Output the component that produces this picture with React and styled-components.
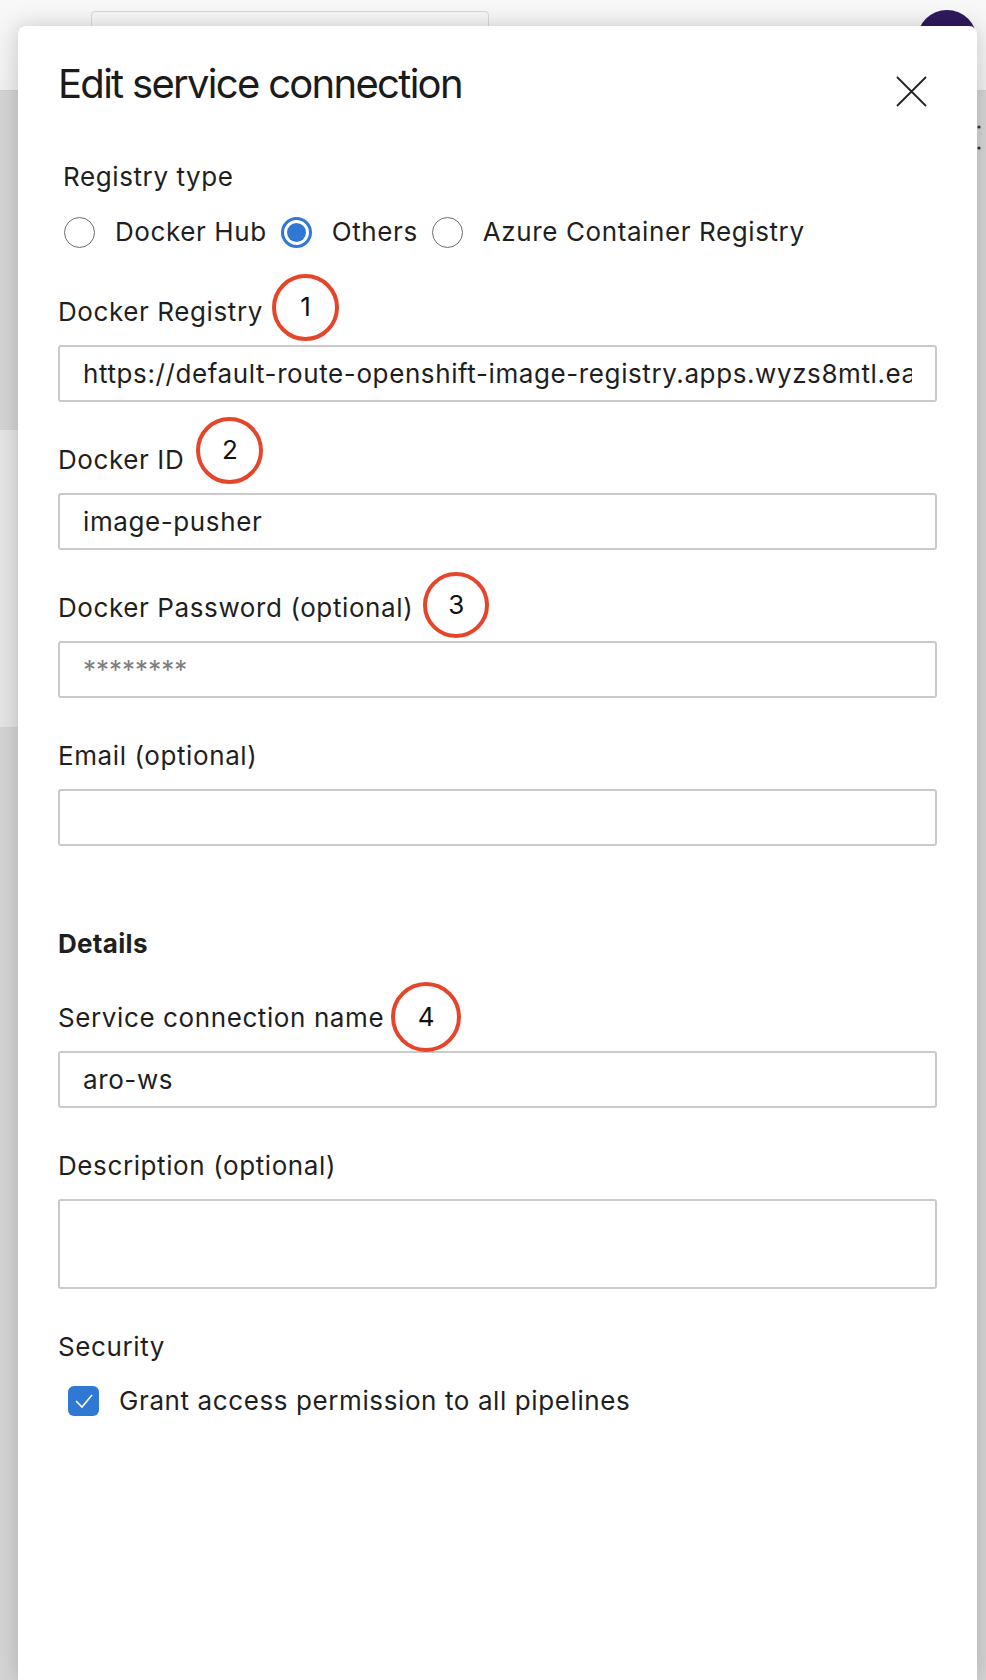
import React from 'react';
import styled, { createGlobalStyle } from 'styled-components';

const GlobalStyle = createGlobalStyle`
  html, body {
    margin: 0;
    padding: 0;
  }
  body {
    width: 986px;
    height: 1680px;
    overflow: hidden;
    background: #d5d5d5;
    font-family: Inter, "Noto Sans", "Liberation Sans", sans-serif;
    color: #1f1f1f;
  }
  * {
    box-sizing: border-box;
  }
`;

// Page that sits behind the dialog
const Page = styled.div`
  position: relative;
  width: 986px;
  height: 1680px;
  overflow: hidden;
  display: flex;
  flex-direction: column;
`;

const TopBar = styled.header`
  flex: none;
  height: 91px;
  display: flex;
  align-items: flex-start;
  justify-content: space-between;
  padding: 11px 9px 0 91px;
  background: linear-gradient(#f8f8f8, #efefef);
  border-bottom: 1px solid #d0d0d0;
`;

const SearchBox = styled.div`
  width: 398px;
  height: 46px;
  border: 1px solid #d8d8d8;
  border-radius: 4px;
  background: #f6f6f6;
`;

const Avatar = styled.div`
  width: 60px;
  height: 60px;
  margin-top: -1px;
  border-radius: 50%;
  background: #2e1a5c;
`;

const Workspace = styled.main`
  flex: 1;
  display: flex;
  flex-direction: column;
  background: #d4d4d4;
`;

const MoreButton = styled.div`
  align-self: flex-end;
  width: 9px;
  height: 28px;
  margin-top: 33px;
`;

const Card = styled.div`
  width: 520px;
  height: 297px;
  margin-top: 278px;
  background: #e4e4e4;
`;

// Dialog
const Panel = styled.section`
  position: absolute;
  top: 26px;
  left: 18px;
  right: 9px;
  bottom: 0;
  padding: 34px 40px 0 40px;
  background: #fff;
  border-radius: 8px 8px 0 0;
  box-shadow: 0 0 22px rgba(0, 0, 0, 0.18);
`;

const Header = styled.div`
  display: flex;
  align-items: flex-start;
  justify-content: space-between;
  height: 48px;
`;

const Title = styled.h1`
  margin: 0;
  font-size: 40px;
  line-height: 48px;
  font-weight: 400;
  letter-spacing: -1.7px;
  color: #1b1b1b;
`;

const CloseButton = styled.button`
  width: 31px;
  height: 31px;
  margin: 16px 10px 0 0;
  padding: 0;
  border: 0;
  background: none;
  cursor: pointer;
`;

const Form = styled.div`
  display: flex;
  flex-direction: column;
  gap: 40px;
  margin-top: 51px;
  font-size: 26px;
  letter-spacing: 0.6px;
`;

const Group = styled.div`
  display: flex;
  flex-direction: column;
  gap: ${p => p.$gap}px;
  padding-left: ${p => p.$indent || 0}px;
  margin-bottom: ${p => p.$after || 0}px;
`;

const Label = styled.div`
  display: flex;
  align-items: center;
  height: 36px;
  line-height: 36px;
  white-space: nowrap;
`;

const SectionTitle = styled(Label)`
  font-weight: 700;
  letter-spacing: 0.3px;
  margin: 40px 0 -2px;
`;

// Hand-drawn style callout next to a label
const Marker = styled.span`
  flex: none;
  display: flex;
  align-items: center;
  justify-content: center;
  width: ${p => p.$size}px;
  height: ${p => p.$size}px;
  margin-left: ${p => p.$gap}px;
  transform: translateY(${p => p.$shift}px);
  border: 4px solid #e5452a;
  border-radius: 50%;
  font-size: 26px;
  letter-spacing: 0;
  color: #111;
`;

const TextInput = styled.input`
  display: block;
  width: 100%;
  height: 57px;
  padding: 0 23px;
  border: 2px solid #cacaca;
  border-radius: 3px;
  background: #fff;
  font: inherit;
  letter-spacing: inherit;
  color: #1e1e1e;
  outline: none;

  &::placeholder {
    color: #7e7e7e;
    letter-spacing: 0;
  }
`;

const TextArea = styled.textarea`
  display: block;
  width: 100%;
  height: 90px;
  padding: 12px 23px;
  border: 2px solid #cacaca;
  border-radius: 3px;
  background: #fff;
  font: inherit;
  resize: none;
  outline: none;
`;

const RadioRow = styled.div`
  display: flex;
  align-items: center;
  gap: 14px;
  height: 36px;
  padding-left: 1px;
`;

const RadioOption = styled.label`
  display: flex;
  align-items: center;
  gap: 20px;
  line-height: 36px;
  white-space: nowrap;
`;

const RadioCircle = styled.span`
  flex: none;
  display: flex;
  align-items: center;
  justify-content: center;
  width: 31px;
  height: 31px;
  border-radius: 50%;
  border: ${p => (p.$checked ? '3px solid #2f78d3' : '1.5px solid #6e6e6e')};
  background: #fff;

  &::after {
    content: '';
    width: 19px;
    height: 19px;
    border-radius: 50%;
    background: ${p => (p.$checked ? '#2f78d3' : 'transparent')};
  }
`;

const CheckRow = styled.label`
  display: flex;
  align-items: center;
  gap: 20px;
  height: 36px;
  padding-left: 10px;
  line-height: 36px;
  white-space: nowrap;
`;

const CheckBox = styled.span`
  flex: none;
  display: flex;
  align-items: center;
  justify-content: center;
  width: 31px;
  height: 30px;
  border-radius: 6px;
  background: #2f78d3;
`;

const registryTypes = [
  { id: 'hub', label: 'Docker Hub' },
  { id: 'others', label: 'Others', checked: true },
  { id: 'acr', label: 'Azure Container Registry' },
];

function Field({ label, marker, children }) {
  return (
    <Group $gap={15}>
      <Label>
        {label}
        {marker && (
          <Marker $size={marker.size} $gap={marker.gap} $shift={marker.shift}>
            {marker.n}
          </Marker>
        )}
      </Label>
      {children}
    </Group>
  );
}

export default function App() {
  return (
    <>
      <GlobalStyle />
      <Page>
        <TopBar>
          <SearchBox />
          <Avatar />
        </TopBar>
        <Workspace>
          <MoreButton>
            <svg width="9" height="28" viewBox="0 0 9 28">
              <circle cx="2" cy="3" r="1.6" fill="#333" />
              <circle cx="2" cy="24" r="1.6" fill="#333" />
            </svg>
          </MoreButton>
          <Card />
        </Workspace>

        <Panel>
          <Header>
            <Title>Edit service connection</Title>
            <CloseButton aria-label="Close">
              <svg width="31" height="31" viewBox="0 0 31 31">
                <path d="M1 1 L30 30 M30 1 L1 30" stroke="#222" strokeWidth="1.8" fill="none" />
              </svg>
            </CloseButton>
          </Header>

          <Form>
            <Group $gap={19} $indent={5} $after={4}>
              <Label>Registry type</Label>
              <RadioRow>
                {registryTypes.map(t => (
                  <RadioOption key={t.id}>
                    <RadioCircle $checked={t.checked} />
                    {t.label}
                  </RadioOption>
                ))}
              </RadioRow>
            </Group>

            <Field label="Docker Registry" marker={{ n: 1, size: 67, gap: 9, shift: -5 }}>
              <TextInput
                readOnly
                value="https://default-route-openshift-image-registry.apps.wyzs8mtl.eastus.aroapp.io"
              />
            </Field>

            <Field label="Docker ID" marker={{ n: 2, size: 67, gap: 12, shift: -10 }}>
              <TextInput readOnly value="image-pusher" />
            </Field>

            <Field label="Docker Password (optional)" marker={{ n: 3, size: 66, gap: 10, shift: -3 }}>
              <TextInput type="password" readOnly placeholder="********" />
            </Field>

            <Field label="Email (optional)">
              <TextInput readOnly />
            </Field>

            <SectionTitle>Details</SectionTitle>

            <Field label="Service connection name" marker={{ n: 4, size: 70, gap: 7, shift: -1 }}>
              <TextInput readOnly value="aro-ws" />
            </Field>

            <Field label="Description (optional)">
              <TextArea readOnly />
            </Field>

            <Group $gap={18}>
              <Label>Security</Label>
              <CheckRow>
                <CheckBox>
                  <svg width="20" height="16" viewBox="0 0 20 16">
                    <path d="M2 8 L8 14 L18 2" stroke="#fff" strokeWidth="1.6" fill="none" />
                  </svg>
                </CheckBox>
                Grant access permission to all pipelines
              </CheckRow>
            </Group>
          </Form>
        </Panel>
      </Page>
    </>
  );
}
